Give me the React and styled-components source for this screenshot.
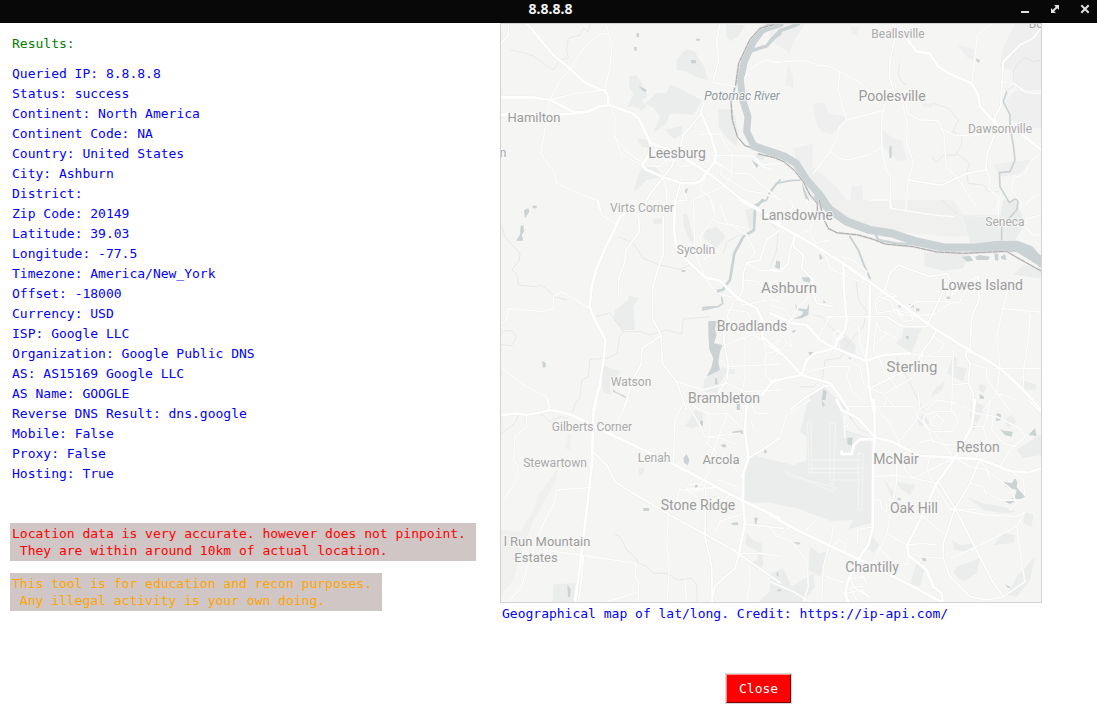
import React from "react";
import styled, { createGlobalStyle, css } from "styled-components";

const Base = createGlobalStyle`
  * { box-sizing: border-box; }
  body { margin: 0; background: #ffffff; }
  body, button { font-family: "DejaVu Sans Mono", monospace; font-size: 13px; }
`;

const TitleBar = styled.header`
  display: grid;
  grid-template-columns: 1fr auto 1fr;
  align-items: start;
  height: 23px;
  padding-right: 4px;
  background: #080808;
  color: #f2f2f2;
`;

const Title = styled.h1`
  grid-column: 2;
  margin: 0;
  padding-left: 8px;
  font: bold 14px/18px "Noto Sans", sans-serif;
`;

const WindowControls = styled.div`
  display: flex;
  justify-content: flex-end;
  gap: 14px;
`;

const WindowButton = styled.button`
  display: flex;
  width: 16px;
  height: 18px;
  padding: 0;
  border: 0;
  background: transparent;
  color: #e0e0e0;
  align-items: center;
  justify-content: center;
`;

const Content = styled.main`
  display: grid;
  grid-template-columns: minmax(480px, 500fr) minmax(542px, 597fr);
  align-items: start;
`;

const Results = styled.section`
  display: flex;
  flex-direction: column;
  align-items: flex-start;
  padding: 11px 10px 0;
`;

const Heading = styled.h2`
  margin: 0 0 10px;
  padding: 0 2px;
  font-size: 13px;
  font-weight: normal;
  line-height: 20px;
  color: #008000;
`;

const Records = styled.ul`
  margin: 0 0 39px;
  padding: 0 2px;
  list-style: none;
  color: #0000ff;
`;

const Record = styled.li`
  line-height: 20px;
`;

const tones = {
  warning: css`color: #ff0000;`,
  caution: css`color: #ffa500;`,
};

const Notice = styled.p`
  margin: 0 0 12px;
  padding: 2px 10px 2px 2px;
  background: #cfc6c5;
  line-height: 17px;
  white-space: pre;
  ${(p) => tones[p.$tone]}
`;

const MapColumn = styled.section`
  display: flex;
  flex-direction: column;
  align-items: flex-start;
`;

const Figure = styled.figure`
  margin: 0;
`;

const MapFrame = styled.div`
  width: 542px;
  border: 1px solid #d3d3d3;
  background: #f5f5f4;
  svg { display: block; width: 100%; }
`;

const Caption = styled.figcaption`
  padding: 1px 2px 0;
  line-height: 20px;
  color: #0000ff;
`;

const CloseRow = styled.div`
  padding: 49px 0 16px 225px;
`;

const CloseButton = styled.button`
  display: block;
  padding: 5px 12px;
  border: 1px solid;
  border-color: #ff9090 #800000 #800000 #ff9090;
  outline: 1px solid #d9d9d9;
  background: #ff0000;
  color: #ffffff;
  line-height: 17px;
  margin: 1px;
`;

const MapText = styled.text`
  font-family: Roboto, sans-serif;
  font-size: ${(p) => p.$size}px;
  font-style: ${(p) => (p.$river ? "italic" : "normal")};
  fill: ${(p) => (p.$river ? "#8e9b9d" : p.$size > 12 ? "#9c9c9c" : "#aaaaaa")};
  stroke: #f7f7f6;
  stroke-width: 2px;
  stroke-linejoin: round;
  paint-order: stroke;
  text-anchor: middle;
`;

const records = [
  ["Queried IP", "8.8.8.8"],
  ["Status", "success"],
  ["Continent", "North America"],
  ["Continent Code", "NA"],
  ["Country", "United States"],
  ["City", "Ashburn"],
  ["District", ""],
  ["Zip Code", "20149"],
  ["Latitude", "39.03"],
  ["Longitude", "-77.5"],
  ["Timezone", "America/New_York"],
  ["Offset", "-18000"],
  ["Currency", "USD"],
  ["ISP", "Google LLC"],
  ["Organization", "Google Public DNS"],
  ["AS", "AS15169 Google LLC"],
  ["AS Name", "GOOGLE"],
  ["Reverse DNS Result", "dns.google"],
  ["Mobile", "False"],
  ["Proxy", "False"],
  ["Hosting", "True"],
];

// Map sheets, each drawn at three units to the pixel from its own origin.
const sheets = [
  {
    x: 0, y: 0,
    parks: [
      "M678 72L736 76 716 108 690 124 680 110Z",
      "M530 180L545 160 560 148 585 155 597 178 612 198 622 240 590 232 560 215 530 210Z",
      "M388 228L410 226 425 250 440 275 442 290 425 300 440 318 425 332 400 318 382 320 400 280 388 262Z",
      "M510 252L606 300 580 345 510 340 500 370 460 398 480 350 462 325 435 312 470 278 500 278Z",
      "M495 390L545 378 548 400 522 418Z",
      "M655 328L700 328 716 398 710 440 678 410 656 380Z",
      "M410 415L440 420 452 445 425 440Z",
      "M425 505L465 500 490 530 440 540 400 580 410 540Z",
      "M770 460L800 465 790 480 760 475Z",
    ],
    water: [
      "M410 100h7v12h-7ZM403 141h7v11h-7ZM588 116h12v6h-12ZM573 180h15v10h-15ZM415 257L440 270 436 276 428 272Z",
      "M755 480L776 495 770 505Z", "M553 570L564 565 560 580 550 578Z", "M98 617h12v8h-12Z",
    ],
    major: [
      "M0 292H100L150 300 225 338 262 336 300 318 330 316 400 341 418 358 452 430 446 465 427 495 437 508 490 532 545 549 580 550 600 545 618 520 645 485 648 460 632 405 603 338",
      "M82 72L130 130 160 165 210 206 255 248 300 268 315 272 325 290 324 316",
      "M0 344H170L225 340 262 334",
      "M452 430L530 455 560 478 640 530 720 595 780 630",
    ],
    medium: [
      "M659 72L650 125 656 180 641 238", "M612 310L600 345 550 405 541 440",
      "M490 532L455 575 435 610", "M541 549L530 590 525 630", "M490 532L515 500 530 455",
      "M25 72L25 105 0 135",
    ],
    minor: [
      "M318 72L325 95 335 150 330 200 315 268", "M325 100L300 102 250 145 210 206 175 250 150 298",
      "M150 300L225 280 310 270", "M147 300V370L135 385 122 460 165 520 168 548 235 580 295 602 302 630",
      "M330 316L345 350 345 410 365 465 427 495", "M345 410L380 455 427 488",
      "M641 238L640 247 705 260", "M735 235L745 210 795 180 840 188",
      "M600 405L630 400 660 403 675 430 697 465 695 525 670 560 600 590 580 600 582 630",
      "M646 466L760 468 790 495 840 490", "M640 485L665 500 662 525 740 572 790 580 840 600",
      "M452 470L480 465 498 480 480 500 450 498", "M495 480H530L540 500 570 495",
      "M490 535L500 570 500 620", "M545 552L560 600 525 605", "M618 525L600 570 630 590 640 630",
      "M650 485L700 520 745 520 840 600", "M760 468L785 500 820 510",
    ],
    tracks: [
      "M270 72L265 95 250 85 240 105 205 115 200 150 205 175 180 180 160 210 130 190 100 168 70 158 32 150",
    ],
    river: [
      ["M840 72L805 82 785 92 760 125 733 185 721 240 728 300 744 350 740 395 762 438 840 464", 21],
      ["M755 152L800 138 820 115 840 100", 10], ["M840 540L810 575 800 600 765 615", 5],
    ],
    bound: ["M820 74L780 85 750 118 716 190 707 255 693 305 697 360 712 410 735 437 775 450 840 474"],
  },
  {
    x: 810, y: 0,
    parks: [
      "M0 72H105L80 110 68 130 60 160 0 120Z", "M55 190L68 230 70 265 45 255Z",
      "M240 80L268 80 262 106 248 105Z", "M128 310L165 310 175 340 228 350 228 362 185 402 155 395 140 370Z",
      "M340 392L370 415 398 425 408 480 385 482 340 442Z", "M562 136L615 148 610 182 590 170Z",
      "M735 72H815V270L740 270 730 215 690 200 700 140Z", "M710 300L735 270 815 285V385L770 380 720 360Z",
      "M670 495L720 485 785 480 750 520 690 530Z", "M455 308L490 312 485 325 460 320Z",
      "M70 445L128 432 128 500 200 560 250 630H150L90 520Z", "M245 560L278 555 280 610 242 600Z",
    ],
    water: ["M618 175L630 180 628 188 620 185Z", "M358 440L365 438 365 475 358 472Z", "M95 545L118 600 110 606 100 575Z"],
    major: ["M405 110L440 155 478 160 505 200 540 222 605 250 625 285 630 320 672 365 700 385", "M745 395L815 450"],
    medium: ["M370 72L375 115 360 180 358 230 374 280", "M815 80L790 115 750 135 700 185 697 240 692 320 675 350 672 410 652 460 647 510 592 520 515 556 415 540"],
    minor: [
      "M0 186L105 182 140 195 175 198 210 215 265 245 300 275", "M210 215L204 270 230 360 345 330",
      "M230 360L208 380 205 402 180 455 130 520", "M180 455L208 475 235 480 295 465 335 442",
      "M347 305L335 360 335 442 348 510 362 530 360 630", "M395 300L412 370 410 430 430 485 415 540 407 630",
      "M408 305L412 340 450 360 505 362 522 402 528 500 560 530 625 630", "M512 385L550 405 600 408 670 395",
      "M665 72L622 105 617 150 605 250", "M697 245L730 250 770 278 815 280", "M815 460L785 480 765 520 730 535 725 570 755 610 750 630",
      "M647 500L660 540 655 565 685 590 680 630", "M815 580L790 590 765 615",
    ],
    tracks: [
      "M388 190L385 225 398 248 410 255", "M490 310L535 325 565 360 548 395 575 410 575 435 560 460 600 490 590 515 595 550 640 555 655 575 685 575",
      "M485 472L500 487 520 465 560 465", "M815 180L790 185 765 172 740 195 730 215 732 260 710 270",
    ],
    river: [
      ["M-50 438L0 455 45 470 78 490 110 540 150 585 180 632", 23], ["M0 580L20 550 60 542 100 540", 5],
      ["M0 124L30 92 65 80 85 72", 10],
      ["M710 275L700 305 720 345 720 380 730 435 735 480 720 515 688 518 690 560 718 608 735 597 748 603", 5],
    ],
    bound: ["M-35 462L10 472 42 485 72 510 100 545 120 585 142 610 142 632"],
  },
  {
    x: 0, y: 600,
    parks: [
      "M460 55H490V72H460Z", "M615 90L650 80 677 110 650 145 610 115Z",
      "M345 330L385 300 385 285 415 295 400 320 405 390 370 390 342 360Z",
      "M305 495L365 515 330 540 332 585 308 575Z", "M735 30L765 20 770 45 750 90Z",
      "M550 40L562 45 582 120 570 125 550 75Z", "M640 520L670 500 685 510 660 550 650 580 610 575 612 540Z",
      "M685 508H705V522H685Z",
    ],
    water: [
      "M72 30L85 25 88 35 75 55ZM62 78L70 75 72 95 65 105 70 122 48 122 60 105Z",
      "M625 363H650L645 390 650 405 642 430 668 435 660 455 655 485 660 510 620 530 635 500 640 475 628 450 625 400Z",
      "M545 210h11v6h-11Z", "M127 483L137 488 137 502 128 502Z", "M338 567L348 575 378 590 376 594 355 582 340 576Z", "M645 535h7v18h-7Z",
      "M828 182L840 185V205L830 198Z", "M712 612h8v18h-8Z",
    ],
    major: [
      "M385 35L360 50 345 85 320 135 290 205 275 260 269 320 285 360 316 418 312 470 298 560 280 630",
      "M525 0L522 85 530 150 560 180 615 232 660 242 710 292 770 325 785 355 787 410 840 455",
      "M720 0L775 30 840 70", "M840 540L815 548 785 585",
    ],
    medium: [
      "M490 50L490 160 470 220 458 265 457 355 483 405 488 492 530 545 560 630",
      "M415 40L418 95 378 150 375 185 356 235 356 285", "M480 408L425 447 424 492 400 535 370 630",
      "M670 350L672 420 685 500 680 540 655 580",
      "M840 90L800 120 780 180 740 190 730 220 728 275 710 300",
    ],
    minor: [
      "M290 0L305 45 350 75", "M269 325L235 305 185 275 160 290 160 325 130 335 25 325 22 355 0 375",
      "M0 500L75 558 140 590 148 630", "M580 0L585 160 620 240 650 280 700 292", "M640 0L645 50 600 110 605 145 640 160 610 180",
      "M645 65L700 80 740 105 765 155 740 195", "M680 330L740 335 760 370 755 405 700 425 675 435",
      "M683 500L840 492M735 415L735 530 725 580", "M700 310L680 350 700 380 740 400 790 380",
      "M530 545L610 570 680 550 735 575 840 570", "M755 405L780 415 805 440 840 420M787 410L800 470 795 520 815 548",
      "M730 240L770 245 800 270 815 300 840 305M740 190L775 210 840 215", "M790 490L800 460 840 450M705 285L730 315 800 300",
      "M660 15L680 70 740 85",
    ],
    tracks: [
      "M5 78L15 110 60 160 58 180 35 210 50 220 55 255 105 260 125 255 165 290 200 300",
      "M360 112L400 130 430 175 480 195 540 208 570 195", "M290 350L330 338 345 360 370 395 420 395 450 405 475 397 500 390 545 402 550 357 630 350",
      "M370 395L358 410 352 460 320 475 270 478 265 530 245 540 240 595 225 610 222 630",
      "M670 160L680 125 730 100", "M0 402L15 392 35 392 50 410 35 437 5 434",
    ],
    river: [
      ["M788 0L765 25 762 90 730 110 703 160 690 240 678 255 668 270 655 272 652 280", 8],
      ["M665 292L668 310 655 320 610 322 608 330 640 322", 5],
    ],
    bound: [],
  },
  {
    x: 810, y: 600,
    lightParks: [
      "M180 0H550L580 45 690 45V100L550 110 380 95 200 50Z",
    ],
    parks: [
      "M463 158H600L580 205 520 212 463 198Z", "M580 48L690 55 700 0H740L765 70 730 130H600Z",
      "M400 383L455 385 440 420 425 460 378 430 395 415Z", "M730 225L760 195 815 205V235Z",
      "M205 420L225 403 258 435 255 462 215 455Z", "M120 580L165 562 205 600 230 630H115Z",
      "M550 465L560 475 560 500 590 505 580 545 530 520Z",
      "M755 540L800 555 795 572 752 565Z", "M500 560L525 545 515 570 480 595Z", "M630 550L650 560 640 580 625 570Z",
    ],
    water: [
      "M575 170L600 167 610 182 592 185ZM615 170L630 165 660 170 655 180 620 180ZM673 160L685 162 685 182 675 180ZM692 170L705 162 710 180 695 178Z",
      "M530 290h10v7h-10ZM408 408h8v8h-8ZM417 312L430 313 432 322 418 322ZM438 325h10v9h-10ZM385 316h8v6h-8Z",
      "M147 162L153 165 158 175 150 180ZM20 182L30 185 28 208 15 202ZM95 232L122 232 120 248 100 244ZM160 300L168 308 160 308ZM628 582L643 590 640 597 630 596Z",
      "M75 310L82 325 110 328 118 308 115 345 95 355 70 357 95 345 100 335 78 328ZM115 457L130 455 120 467ZM235 470L245 476 238 478ZM65 392L80 390 70 400Z",
      "M160 568L170 575 165 610 155 600Z",
    ],
    major: [
      "M0 62L80 105 148 145 220 190 410 325 500 390 600 452 690 505 750 560 815 630",
      "M220 190L222 270 230 360 225 390 205 415 195 440",
      "M300 258L298 380 288 480 295 520 298 565 310 630",
      "M0 340L70 370 110 375 150 420 195 445 288 482 340 465 420 460",
      "M0 440L40 465 95 525 180 550 210 590 235 630",
      "M0 545L95 525 110 480 135 460 195 445",
    ],
    medium: [
      "M500 390L480 425 460 450 445 480", "M590 452L587 470 600 490 595 550 610 580 610 630",
      "M625 230L627 300 605 350 600 450", "M345 268L360 220 385 195 480 230 530 220 550 255 545 285",
      "M0 208L30 215 55 190 60 150 75 105", "M300 565L400 515 440 490M170 350H350L400 380 470 380 530 250",
      "M60 630L110 590 160 560 190 555", "M75 105L70 140 100 165 95 205 125 235 130 280 140 310 190 320",
    ],
    minor: [
      "M148 145L170 175 180 205 230 228 300 258", "M215 170L250 180 290 215 280 245", "M345 268L315 305 320 340 380 330 400 350",
      "M380 415L330 390 320 365 310 450 330 480 345 520 380 560M320 430L350 400",
      "M410 325L440 305 530 305 580 310", "M440 345L490 345 540 310 570 305 600 250", "M545 285L580 250 625 230",
      "M490 410L520 430 515 450 470 470", "M345 270L380 290 345 290 320 310",
      "M695 325L815 337M720 235L705 300 680 410 690 500 680 580", "M760 560V510L775 420 780 340",
      "M600 490L650 505 650 535 680 580 720 630M550 450L545 630M545 555L595 550M680 505H815",
      "M300 0H360L365 25 490 45 550 50M688 0L685 50", "M815 45L770 55 765 80 790 105 815 105",
      "M140 420L180 350M60 370L85 320 115 290", "M80 105L120 90 130 65 110 0M120 100L135 130 180 120",
      "M0 315L40 325 65 355 50 380 65 440M40 410L60 440", "M230 360L265 375 270 430 288 480",
      "M235 480L270 500 280 550 295 565 340 580 380 630M180 500H240L230 530 250 580 290 610",
      "M325 290L360 300 375 340 440 350M380 330L420 340 430 360 400 365Z", "M30 60L70 20 60 0M95 280L125 270 130 235",
      "M190 400L205 390 220 410 200 425ZM95 525L130 510 180 500M0 480L25 460 50 430",
      "M420 460L470 470 545 470M470 630L500 600 560 610M640 630L680 580 715 590 740 600",
      "M460 460L440 520 410 545 345 580M445 580L450 630M590 455L640 470 690 505",
    ],
    tracks: [
      "M0 65L25 90 20 150 0 200", "M258 240L265 300 290 335 280 380 235 430 210 475 165 480 158 535 130 560 90 560",
      "M130 345L155 350 180 380 250 440", "M380 470L460 630M515 0L560 40",
    ],
    river: [
      ["M145 -10L175 25 230 65 300 90 365 100 440 125 520 143 620 142 680 136 740 135 780 150 815 190", 25],
      ["M620 146L680 138 745 142 815 185", 30],
      ["M315 100L325 120 380 130 440 133", 7], ["M240 110L265 150 280 190 300 235", 6], ["M695 120V80L740 30 745 0", 5],
    ],
    bound: ["M148 0L160 55 175 85 200 98 265 105 310 118 345 132 430 140 500 156 580 160 710 154 740 172 790 200 815 214"],
  },
  {
    x: 0, y: 1200,
    parks: [
      "M735 185L765 165 840 190V308H735Z", "M585 30L610 40 605 75 580 85 555 80Z",
      "M160 553L225 550 222 606H157Z", "M740 400L760 420 785 430 790 495 775 510 755 490 775 475 770 450 735 435Z",
      "M415 205L435 205 430 220 420 230Z", "M780 600L840 550V606H780Z",
    ],
    lightParks: [
      "M175 205L165 245 130 310 100 360 60 470 40 540 0 590V390L60 395 95 340 115 285Z",
      "M205 100L215 108 210 150 195 145Z",
    ],
    water: [
      "M710 10h9v20h-9ZM600 62h9v15h-9ZM695 95L728 90 728 102 700 100ZM662 135L675 132 680 142 668 142ZM550 175L560 162 568 180 563 196 552 188ZM792 150h8v10h-8Z",
      "M585 254h8v14h-8ZM430 324h17v9h-17ZM692 370L712 366 715 375 700 376ZM763 352L774 355 766 378ZM202 553L212 568 210 592 204 590ZM828 515h6v16h-6Z",
    ],
    major: [
      "M0 46L50 40 80 45 155 30 215 45 275 75 330 102 520 192 720 298 840 355",
      "M290 0L280 45 278 100 277 180 265 290 240 500 225 606",
      "M740 0L735 90 745 175 730 220 728 300 735 370 715 470",
    ],
    medium: [
      "M250 470L245 540 235 606", "M277 155L320 195 345 245 400 280 510 345 700 450 840 548",
      "M840 115L745 175", "M720 298L648 262 540 270", "M715 470L705 505 645 558 635 606", "M617 270L615 410 635 500 637 606",
      "M850 385L730 372",
    ],
    minor: [
      "M80 45L80 80 45 110 40 180 55 200 50 240 10 300", "M148 30L145 0M275 262L170 270 162 310 130 370 85 490 65 560 25 606",
      "M130 450L240 465 408 490 405 530 415 540V606M320 606L410 578M385 0L335 100",
      "M505 345L500 430 508 490 502 606", "M550 10L525 60 520 190M560 10L600 75 615 110 665 115 720 138M680 45L630 180 625 220 590 270",
      "M575 15L625 40 630 90 625 110M630 42L680 40 730 90M750 0L765 40 810 40M750 60L765 90",
      "M540 265L530 300 600 320 670 310 690 280M655 240L710 260 718 280M645 400L660 365 730 340M715 460H780L840 470",
      "M745 500L752 530 740 606M560 260L565 275 610 270 615 255 590 250 565 255M720 100L630 110 620 130 650 155 640 175",
      "M555 540L560 606M670 160L725 230M600 320L605 340M555 270L590 290",
    ],
    tracks: [
      "M0 105L25 85 45 70 55 45M120 40L150 65 180 50 200 55 220 30",
      "M345 403L360 410 380 450 400 465 415 488 440 500 460 520 500 520 535 540 575 535 590 555 592 606",
    ],
    river: [],
    bound: [],
  },
  {
    x: 810, y: 1200,
    parks: [
      "M115 0H205L225 90 290 110 305 130 305 370 280 375 235 388 250 360 180 362 150 350 80 325 0 308V178L70 195 110 180 110 110 90 95Z",
      "M440 485L465 500 450 560 420 555Z", "M300 400L328 435 310 460 290 440Z",
      "M40 505L65 560 130 520 135 560 100 606H0V520Z", "M120 440L150 460 180 450 150 530 115 510Z",
      "M740 150L815 100V165L760 175Z", "M545 420L570 435 610 430 600 455 555 450Z",
      "M560 500L630 475 620 520 580 545 550 520Z", "M700 400L735 405 730 430 670 435Z", "M795 470L740 530 710 585 740 590 780 540Z",
      "M590 290L640 310 700 320 740 335 700 340 640 330Z", "M380 245L435 255 420 285 385 260Z",
      "M340 235L380 290 370 305Z", "M440 60L460 40 480 70 450 80Z", "M765 335L790 345 785 380 760 370Z",
      "M605 0L650 20 620 70 600 50Z", "M725 45L740 65 715 85 700 60Z",
    ],
    water: [
      "M232 113L248 113 245 138 232 132ZM155 0L165 15 158 22Z", "M680 40L692 42 695 60 678 64ZM690 88L702 92 728 95 725 110 705 105ZM775 105L795 85 800 108Z",
      "M735 235L742 245 740 262 765 290 720 312 705 305 735 290 740 270 705 260 700 245 725 250ZM67 425L92 428 85 434ZM455 475L465 472 470 482 460 484ZM705 552L722 562 715 565ZM20 517h5v12h-5ZM22 568h12v6h-12ZM605 72L616 76 610 90ZM383 293h9v8h-9Z",
    ],
    major: [
      "M200 0L215 30 265 55 315 112 365 125 450 168 550 173 630 178 720 213 770 218 815 205",
      "M0 345L90 395 190 442 270 480 440 565 515 606",
      "M312 0L315 112 310 160 308 385 295 435 270 470 235 540 225 580 235 606",
      "M615 0L605 80 555 173 500 250 455 350 412 435 415 465 470 510 490 560 515 580 518 606",
      "M315 118L270 118 252 135 245 162 215 162 215 155",
    ],
    medium: [
      "M775 0L815 40", "M630 178L600 250 555 325 520 430 520 475 540 530 600 590 650 600",
      "M505 245L555 325 665 540 700 590M270 480L240 530 250 560 300 590",
    ],
    minor: [
      "M0 135L30 110 50 45 120 0M225 112L222 50 240 60 230 80 222 80",
      "M230 20H430L440 50 470 75 490 130M340 20L350 0M312 20L360 70 385 120 400 180",
      "M460 60L465 45 500 35 550 35 565 65 545 95 490 95 465 80ZM480 60L500 45 520 60 510 80 485 75ZM490 95L520 130 545 165",
      "M390 120L440 60 445 30 490 0M400 170L405 210 430 235 490 205 550 175M380 175V245L350 400 330 445 300 510",
      "M315 230L380 225 430 235 505 250M460 350L520 400M510 280L540 325 650 345 740 350 765 335M540 328H620",
      "M605 80L640 80 650 120 620 170M640 80L650 60 660 0M630 180L660 220 720 265 740 310 720 330",
      "M575 15L620 40 680 50 750 85 765 110 720 150 690 200M670 50L665 90 700 130 740 140",
      "M480 170L470 210 510 280M440 130L480 120 520 135 600 130M430 150L380 170",
      "M308 300L330 300 335 325 350 335 350 310M262 430V390L310 380M190 375L185 410 160 500 155 606M185 440L205 420 225 430 225 455",
      "M350 400L412 435 455 430 500 435M170 530L230 550M225 580L280 570 300 606M240 535L280 530 290 550",
      "M260 600L240 560 280 560M650 600L700 590 765 545M540 475L610 445 740 380 765 335",
      "M0 380L20 410 60 420 110 480 115 560 100 606M0 545L70 575 120 606M20 410L60 380M110 390L135 360",
      "M412 435L415 490 380 500 330 445M555 173L600 200 650 210 660 240M640 270L690 300 750 300M600 250L640 260 650 290",
      "M520 475L450 470 430 460M765 545L755 490 740 380M720 213L760 240 765 285",
    ],
    tracks: ["M240 50L270 90 300 100M220 20L245 60"],
    river: [],
    bound: [],
    runways: [
      "M112 68L118 220 125 220 123 68ZM180 70V250L190 255 197 70ZM265 160V330L275 332 280 165ZM48 215L190 275 198 263 52 225Z",
      "M125 180H270M118 205H275M118 218H270M185 240H280",
    ],
  },
];

const places = [
  ["Beallsville", 898, 38, 12], ["Poolesville", 892, 101, 14], ["Dawsonville", 1000, 133, 12],
  ["Potomac River", 742, 100, 12, true], ["Hamilton", 534, 122, 13], ["n", 503, 157, 12],
  ["Leesburg", 677, 158, 14], ["Virts Corner", 642, 212, 12], ["Sycolin", 696, 254, 12],
  ["Lansdowne", 797, 220, 14], ["Seneca", 1005, 226, 12], ["Ashburn", 789, 293, 15],
  ["Lowes Island", 982, 290, 14], ["Broadlands", 752, 331, 14], ["Sterling", 912, 372, 15],
  ["Watson", 631, 386, 12], ["Brambleton", 724, 403, 14], ["Gilberts Corner", 592, 431, 12],
  ["Stewartown", 555, 467, 12], ["Lenah", 654, 462, 12], ["Arcola", 721, 464, 13],
  ["McNair", 896, 464, 14], ["Reston", 978, 452, 14], ["Stone Ridge", 698, 510, 14],
  ["Oak Hill", 914, 513, 14], ["l Run Mountain", 547, 546, 13], ["Estates", 536, 562, 13],
  ["Chantilly", 872, 572, 14], ["Bo", 1036, 28, 12],
];

function Lines({ paths, color, width, dash }) {
  return paths.map((d, i) => (
    <path key={i} d={d} fill="none" stroke={color} strokeWidth={width} strokeDasharray={dash}
      strokeLinejoin="round" strokeLinecap="round" />
  ));
}

const sheetPosition = (s) => `translate(${s.x} ${s.y})`;

function AreaMap() {
  return (
    <svg viewBox="501 24 540 578" role="img" aria-label="Map of Ashburn, Virginia">
      <g transform="translate(500 0) scale(0.33333)">
        {sheets.map((s, i) => (
          <g key={i} transform={sheetPosition(s)}>
            {(s.lightParks || []).map((d, n) => <path key={n} d={d} fill="#f0f0ef" />)}
            {s.parks.map((d, n) => <path key={n} d={d} fill={s.x > 0 && s.y === 0 ? "#eeefee" : "#ebedec"} />)}
            <Lines paths={s.tracks} color="#e0e1e1" width={2} />
            {s.water.map((d, n) => <path key={n} d={d} fill="#cad2d3" />)}
          </g>
        ))}
        {sheets.map((s, i) => (
          <g key={i} transform={sheetPosition(s)}>
            {s.river.map(([d, w], n) => <Lines key={n} paths={[d]} color="#cad2d3" width={w} />)}
            <Lines paths={s.bound} color="#dedede" width={6} />
            <Lines paths={s.bound} color="#a8a6a6" width={3} dash="14 4" />
          </g>
        ))}
        {sheets.map((s, i) => (
          <g key={i} transform={sheetPosition(s)}>
            <Lines paths={s.minor} color="#eeeeed" width={6} />
            <Lines paths={s.medium} color="#ececeb" width={8} />
            <Lines paths={s.major} color="#ebebea" width={10} />
            <Lines paths={s.runways || []} color="#f4f4f2" width={3} />
          </g>
        ))}
        {sheets.map((s, i) => (
          <g key={i} transform={sheetPosition(s)}>
            <Lines paths={s.minor} color="#fdfdfd" width={4} />
            <Lines paths={s.medium} color="#ffffff" width={5} />
            <Lines paths={s.major} color="#ffffff" width={8} />
          </g>
        ))}
      </g>
      {places.map(([name, x, y, size, river]) => (
        <MapText key={name} x={x} y={y} $size={size} $river={river}>{name}</MapText>
      ))}
    </svg>
  );
}

export default function App() {
  return (
    <>
      <Base />
      <TitleBar>
        <Title>8.8.8.8</Title>
        <WindowControls>
          <WindowButton aria-label="Minimize">
            <svg width="10" height="10"><path d="M1 7h8v2H1Z" fill="currentColor" /></svg>
          </WindowButton>
          <WindowButton aria-label="Maximize">
            <svg width="10" height="10" viewBox="0 0 10 10">
              <path d="M4 1H9V6ZM1 4V9H6Z" fill="currentColor" />
              <path d="M3 7L7 3" stroke="currentColor" strokeWidth="2" />
            </svg>
          </WindowButton>
          <WindowButton aria-label="Close window">
            <svg width="10" height="10" viewBox="0 0 10 10">
              <path d="M2 2L8 8M8 2L2 8" stroke="currentColor" strokeWidth="2" strokeLinecap="square" />
            </svg>
          </WindowButton>
        </WindowControls>
      </TitleBar>
      <Content>
        <Results>
          <Heading>Results:</Heading>
          <Records>
            {records.map(([name, value]) => (
              <Record key={name}>{name}: {value}</Record>
            ))}
          </Records>
          <Notice $tone="warning">{"Location data is very accurate. however does not pinpoint.\n They are within around 10km of actual location."}</Notice>
          <Notice $tone="caution">{"This tool is for education and recon purposes.\n Any illegal activity is your own doing."}</Notice>
        </Results>
        <MapColumn>
          <Figure>
            <MapFrame><AreaMap /></MapFrame>
            <Caption>Geographical map of lat/long. Credit: https://ip-api.com/</Caption>
          </Figure>
          <CloseRow>
            <CloseButton>Close</CloseButton>
          </CloseRow>
        </MapColumn>
      </Content>
    </>
  );
}
